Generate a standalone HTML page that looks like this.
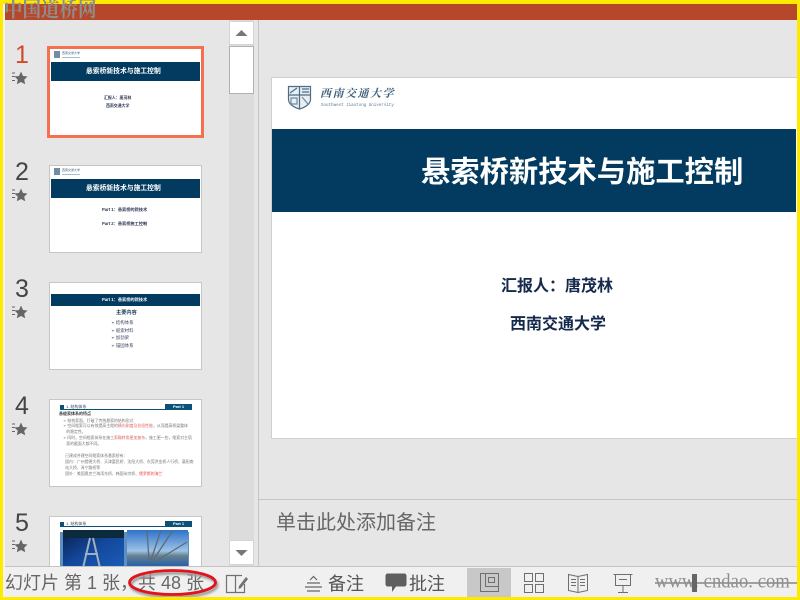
<!DOCTYPE html>
<html lang="zh"><head><meta charset="utf-8"><title>幻灯片</title>
<style>
html,body{margin:0;padding:0;background:#fff}
#p{position:relative;width:800px;height:600px;overflow:hidden;background:#e6e6e6;font-family:"Liberation Sans","Noto Sans CJK SC",sans-serif}
#p div,#p svg{position:absolute}
.t{white-space:nowrap;line-height:1}
.thumb{background:#fff;box-sizing:border-box;border:1px solid #c6c6c6;overflow:hidden}
.band{background:#023b5f}
.n{font-size:25px;color:#444;line-height:1;white-space:nowrap}
.tx{white-space:nowrap;line-height:1;text-align:center}
</style></head><body><div id="p">

<div style="left:0;top:20px;width:800px;height:547px;background:#e6e6e6"></div>
<div style="left:4px;top:4px;width:796px;height:16px;background:#b7472a"></div>

<!-- divider / main -->
<div style="left:258px;top:20px;width:1px;height:546px;background:#c4c4c4"></div>
<div style="left:259px;top:499px;width:540px;height:1px;background:#c4c4c4"></div>

<!-- scrollbar -->
<div style="left:229px;top:20px;width:25px;height:546px;background:#dcdcdc"></div>
<div style="left:229px;top:21px;width:25px;height:24px;background:#fff;border:1px solid #d4d4d4;box-sizing:border-box"></div>
<svg style="left:235px;top:29px" width="13" height="8"><path d="M6.500 1L12.500 7H.5Z" fill="#777"/></svg>
<div style="left:229px;top:46px;width:25px;height:48px;background:#fff;border:1px solid #b0b0b0;box-sizing:border-box"></div>
<div style="left:229px;top:540px;width:25px;height:25px;background:#fff;border:1px solid #d4d4d4;box-sizing:border-box"></div>
<svg style="left:235px;top:549px" width="13" height="8"><path d="M.5 1H12.500L6.500 7Z" fill="#777"/></svg>

<!-- slide numbers and stars -->
<div class="n" style="left:15px;top:43px;color:#d2492a">1</div>
<div class="n" style="left:15px;top:160px">2</div>
<div class="n" style="left:15px;top:277px">3</div>
<div class="n" style="left:15px;top:394px">4</div>
<div class="n" style="left:15px;top:511px">5</div>
<svg style="left:12px;top:71px" width="16" height="14"><path d="M0 2H3M0 5.500H3M0 9.500H3" stroke="#666" stroke-width="1"/><path d="M9 .5L11 5 15.500 5.500 12.200 8.800 13.200 13.300 9 11 4.800 13.300 5.800 8.800 2.500 5.500 7 5Z" fill="#666"/></svg>
<svg style="left:12px;top:188px" width="16" height="14"><path d="M0 2H3M0 5.500H3M0 9.500H3" stroke="#666" stroke-width="1"/><path d="M9 .5L11 5 15.500 5.500 12.200 8.800 13.200 13.300 9 11 4.800 13.300 5.800 8.800 2.500 5.500 7 5Z" fill="#666"/></svg>
<svg style="left:12px;top:305px" width="16" height="14"><path d="M0 2H3M0 5.500H3M0 9.500H3" stroke="#666" stroke-width="1"/><path d="M9 .5L11 5 15.500 5.500 12.200 8.800 13.200 13.300 9 11 4.800 13.300 5.800 8.800 2.500 5.500 7 5Z" fill="#666"/></svg>
<svg style="left:12px;top:422px" width="16" height="14"><path d="M0 2H3M0 5.500H3M0 9.500H3" stroke="#666" stroke-width="1"/><path d="M9 .5L11 5 15.500 5.500 12.200 8.800 13.200 13.300 9 11 4.800 13.300 5.800 8.800 2.500 5.500 7 5Z" fill="#666"/></svg>
<svg style="left:12px;top:539px" width="16" height="14"><path d="M0 2H3M0 5.500H3M0 9.500H3" stroke="#666" stroke-width="1"/><path d="M9 .5L11 5 15.500 5.500 12.200 8.800 13.200 13.300 9 11 4.800 13.300 5.800 8.800 2.500 5.500 7 5Z" fill="#666"/></svg>

<!-- thumb 1 -->
<div style="left:47px;top:46px;width:157px;height:92px;background:#fff;border:3px solid #f4704f;box-sizing:border-box"></div>
<div style="left:54px;top:51px;width:6px;height:7px;background:#6f8ea6"></div>
<div class="t" style="left:62px;top:52px;font-size:3px;color:#3c6482">西南交通大学</div>
<div style="left:62px;top:57px;width:18px;height:1px;background:#a9bccb"></div>
<div class="band" style="left:51px;top:62px;width:149px;height:19px"></div>
<div class="t" style="left:86px;top:69px;font-size:6.800px;font-weight:700;color:#fff">悬索桥新技术与施工控制</div>
<div class="t" style="left:104px;top:96px;font-size:3.900px;font-weight:700;color:#2a3550">汇报人：唐茂林</div>
<div class="t" style="left:106px;top:104px;font-size:3.900px;font-weight:700;color:#2a3550">西南交通大学</div>

<!-- thumb 2 -->
<div class="thumb" style="left:49px;top:165px;width:153px;height:88px"></div>
<div style="left:54px;top:168px;width:6px;height:7px;background:#6f8ea6"></div>
<div class="t" style="left:62px;top:169px;font-size:3px;color:#3c6482">西南交通大学</div>
<div style="left:62px;top:174px;width:18px;height:1px;background:#a9bccb"></div>
<div class="band" style="left:51px;top:179px;width:149px;height:19px"></div>
<div class="t" style="left:86px;top:186px;font-size:6.800px;font-weight:700;color:#fff">悬索桥新技术与施工控制</div>
<div class="t" style="left:102px;top:207.500px;font-size:4.200px;font-weight:700;color:#2a3550">Part 1：悬索桥的新技术</div>
<div class="t" style="left:102px;top:221.500px;font-size:4.200px;font-weight:700;color:#2a3550">Part 2：悬索桥施工控制</div>

<!-- thumb 3 -->
<div class="thumb" style="left:49px;top:282px;width:153px;height:88px"></div>
<div class="band" style="left:51px;top:294px;width:149px;height:12px"></div>
<div class="t" style="left:102px;top:298px;font-size:4.200px;font-weight:700;color:#fff">Part 1：悬索桥的新技术</div>
<div class="t" style="left:116px;top:310.500px;font-size:5.200px;font-weight:700;color:#1f3a55">主要内容</div>
<div class="t" style="left:111px;top:319px;font-size:4.400px;color:#3a4560;line-height:7.700px">➢ 结构体系<br>➢ 缆索材料<br>➢ 加劲梁<br>➢ 锚固体系</div>

<!-- thumb 4 -->
<div class="thumb" style="left:49px;top:399px;width:153px;height:88px"></div>
<div style="left:60px;top:405px;width:4px;height:5px;background:#0a5278"></div>
<div style="left:60px;top:409px;width:132px;height:1px;background:#0a5278"></div>
<div class="t" style="left:66px;top:405px;font-size:4px;color:#3a4560">1. 结构体系</div>
<div style="left:165px;top:404px;width:27px;height:6px;background:#0a5278"></div>
<div class="tx" style="left:165px;top:405px;width:27px;font-size:4px;font-weight:700;color:#fff">Part 1</div>
<div class="t" style="left:59px;top:412px;font-size:4px;font-weight:700;color:#333">悬缆索体系的特点</div>
<div class="t" style="left:63px;top:417.500px;font-size:3.900px;color:#777;line-height:5.900px">➢ 结构索面，打破了传统悬索的结构形式<br>➢ 空间缆索可以有效提高主缆的<span style="color:#d66">横向刚度及抗扭性能</span>，从而提高桥梁整体<br>&nbsp;&nbsp;&nbsp;的稳定性。<br>➢ 同时，空间缆索体系在施工<span style="color:#d66">索鞍转角更加复杂</span>，施工更一些，缆索对主塔<br>&nbsp;&nbsp;&nbsp;索的截面大都不同。<br>&nbsp;<br>&nbsp;&nbsp;已建成并建空间缆索体系悬索桥有：<br>&nbsp;&nbsp;国内：广州猎德大桥、天津富民桥、沈阳大桥、东莞洪金桥人行桥、襄阳南<br>&nbsp;&nbsp;站大桥、泽宁路桥等<br>&nbsp;&nbsp;国外：美国奥克兰海湾东桥、韩国永宗桥、<span style="color:#e44">俄罗斯的海兰</span></div>

<!-- thumb 5 -->
<div class="thumb" style="left:49px;top:516px;width:153px;height:60px"></div>
<div style="left:60px;top:522px;width:4px;height:5px;background:#0a5278"></div>
<div style="left:60px;top:526px;width:132px;height:1px;background:#0a5278"></div>
<div class="t" style="left:66px;top:522px;font-size:4px;color:#3a4560">1. 结构体系</div>
<div style="left:165px;top:521px;width:27px;height:6px;background:#0a5278"></div>
<div class="tx" style="left:165px;top:522px;width:27px;font-size:4px;font-weight:700;color:#fff">Part 1</div>
<div style="left:60px;top:532px;width:129px;height:36px;background:#5d8fc0"></div>
<svg style="left:63px;top:530px" width="61" height="38"><defs><linearGradient id="g1" x1="0" y1="0" x2="1" y2="1"><stop offset="0" stop-color="#0a1f4a"/><stop offset=".5" stop-color="#13489c"/><stop offset="1" stop-color="#1a5cb8"/></linearGradient></defs><rect width="61" height="38" fill="url(#g1)"/><rect width="61" height="8" fill="#0c2a3d"/><path d="M27 8L20 38M30 8L37 38M22 24H35" stroke="#9fb0c0" stroke-width="2" fill="none"/></svg>
<svg style="left:127px;top:530px" width="61" height="38"><defs><linearGradient id="g2" x1="0" y1="0" x2="0" y2="1"><stop offset="0" stop-color="#2f72c8"/><stop offset=".55" stop-color="#9cc3e6"/><stop offset=".68" stop-color="#67808f"/><stop offset="1" stop-color="#1a5cb0"/></linearGradient></defs><rect width="61" height="38" fill="url(#g2)"/><path d="M20 0L22 30M34 0L24 30M46 0L25 32M60 12L26 33" stroke="#5d6b78" stroke-width="1.300" fill="none"/></svg>

<!-- main slide -->
<div style="left:271px;top:77px;width:526px;height:362px;background:#fff;border:1px solid #cfcfcf;border-right:none;box-sizing:border-box"></div>
<svg style="left:287px;top:84px" width="25" height="26" viewBox="0 0 25 26"><path d="M1.500 2.500H23.500V15.500C23.500 20 18 23.500 12.500 25 7 23.500 1.500 20 1.500 15.500Z" fill="#e9eef2" stroke="#4b6d88" stroke-width="1.200"/><path d="M1.500 11H23.500M12.500 2.500V25" stroke="#4b6d88" stroke-width="1.200"/><path d="M3 9L10 4M15 5H22M15 8H22" stroke="#4b6d88" stroke-width="1.200" fill="none"/><path d="M4 14H10V20H4ZM15 13L21 20" stroke="#6f8aa0" stroke-width="1.200" fill="none"/></svg>
<div class="t" style="left:320px;top:88px;font-size:11px;color:#3d5f7c;letter-spacing:1.500px;font-style:italic;font-family:'Noto Serif CJK SC',serif;font-weight:700">西南交通大学</div>
<div class="t" style="left:321px;top:104px;font-size:4.200px;color:#5d7d98;font-family:'Liberation Mono',monospace">Southwest Jiaotong University</div>
<div class="band" style="left:272px;top:129px;width:524px;height:83px"></div>
<div class="t" style="left:421px;top:158px;font-size:29.300px;font-weight:700;color:#fff">悬索桥新技术与施工控制</div>
<div class="t" style="left:501px;top:279px;font-size:16px;font-weight:700;color:#14294b">汇报人：唐茂林</div>
<div class="t" style="left:510px;top:317px;font-size:16px;font-weight:700;color:#14294b">西南交通大学</div>

<div class="t" style="left:276px;top:513px;font-size:20px;color:#666">单击此处添加备注</div>

<!-- status bar -->
<div style="left:0;top:567px;width:800px;height:33px;background:#f0f0f0"></div>
<div style="left:4px;top:566px;width:794px;height:1px;background:#c4c4c4"></div>
<div class="t" style="left:5px;top:574px;font-size:18px;color:#666">幻灯片 第 1 张，共 48 张</div>
<svg style="left:125px;top:568px" width="100" height="34"><defs><filter id="s" x="-10%" y="-30%" width="120%" height="160%"><feGaussianBlur stdDeviation="1"/></filter></defs><ellipse cx="49" cy="17" rx="43" ry="12" fill="none" stroke="#999" stroke-width="3" filter="url(#s)"/><ellipse cx="47.500" cy="14.500" rx="43" ry="12" fill="none" stroke="#e1141c" stroke-width="2.800"/></svg>
<svg style="left:225px;top:573px" width="24" height="21" fill="none" stroke="#707070" stroke-width="1.200"><path d="M1.500 2.500H10.500V19.500H1.500ZM10.500 2.500H17M10.500 19.500H19.500V11"/><path d="M14 13L21 4 23 6 16 15 13.500 16Z" fill="#707070" stroke="none"/></svg>
<svg style="left:304px;top:574px" width="19" height="18" stroke="#666" stroke-width="1.200" fill="none"><path d="M6 6L9.500 2.500 13 6M3 9H16M1 13H18M3 17H16"/></svg>
<div class="t" style="left:328px;top:575px;font-size:18px;color:#555">备注</div>
<svg style="left:385px;top:572px" width="23" height="22"><path d="M3 1.500H19Q21.500 1.500 21.500 4V12Q21.500 14.500 19 14.500H11L7 20V14.500H3Q.5 14.500 .5 12V4Q.5 1.500 3 1.500Z" fill="#5f5f5f"/></svg>
<div class="t" style="left:409px;top:575px;font-size:18px;color:#555">批注</div>
<div style="left:467px;top:568px;width:44px;height:29px;background:#c8c8c8"></div>
<svg style="left:480px;top:573px" width="19" height="20" fill="none" stroke="#6e6e6e" stroke-width="1"><path d="M.5 .5H18.500V18.500H.5ZM5.500 .5V13.500H18.500M8.500 4.500H14.500V9.500H8.500Z"/></svg>
<svg style="left:524px;top:573px" width="20" height="20" fill="none" stroke="#6e6e6e" stroke-width="1"><path d="M.5 .5H8.500V8.500H.5ZM11.500 .5H19.500V8.500H11.500ZM.5 11.500H8.500V19.500H.5ZM11.500 11.500H19.500V19.500H11.500Z"/></svg>
<svg style="left:568px;top:573px" width="20" height="20" fill="none" stroke="#6e6e6e" stroke-width="1"><path d="M.5 1.500L10 3.500 19.500 1.500V17.500L10 19.500 .5 17.500ZM10 3.500V19.500M3 6.500H8M3 9.500H8M3 12.500H8M12 6.500H17M12 9.500H17M12 12.500H17"/></svg>
<svg style="left:613px;top:573px" width="20" height="20" fill="none" stroke="#6e6e6e" stroke-width="1"><path d="M.5 1.500H19.500M2.500 1.500V12.500H17.500V1.500M10 12.500V19M5 19.500H15M6 6.500H14"/></svg>
<div style="left:655px;top:582px;width:142px;height:2px;background:#a0a0a0"></div>
<div class="t" style="left:655px;top:572px;font-size:18.500px;letter-spacing:.1px;color:#8f8f8f;transform:scaleY(1.1);transform-origin:0 0;font-family:'Liberation Serif',serif">www. cndao. com</div>
<div style="left:692px;top:574px;width:5px;height:18px;background:#666"></div>

<!-- yellow frame -->
<div style="left:0;top:0;width:800px;height:4px;background:#ffe900"></div>
<div style="left:0;top:0;width:3px;height:600px;background:#ffe900"></div>
<div style="left:797px;top:0;width:3px;height:600px;background:#ffe900"></div>
<div style="left:0;top:597px;width:800px;height:3px;background:#ffe900"></div>
<div style="left:3px;top:4px;width:1.500px;height:593px;background:#f4f4f0"></div>

<!-- top-left watermark sits above the frame -->
<div class="t" style="left:4px;top:1px;font-size:18.500px;font-weight:700;color:#8e8e8e;transform:scaleY(1.1);transform-origin:0 0;font-family:'Liberation Serif','Noto Serif CJK SC',serif">中国道桥网</div>
</div></body></html>
